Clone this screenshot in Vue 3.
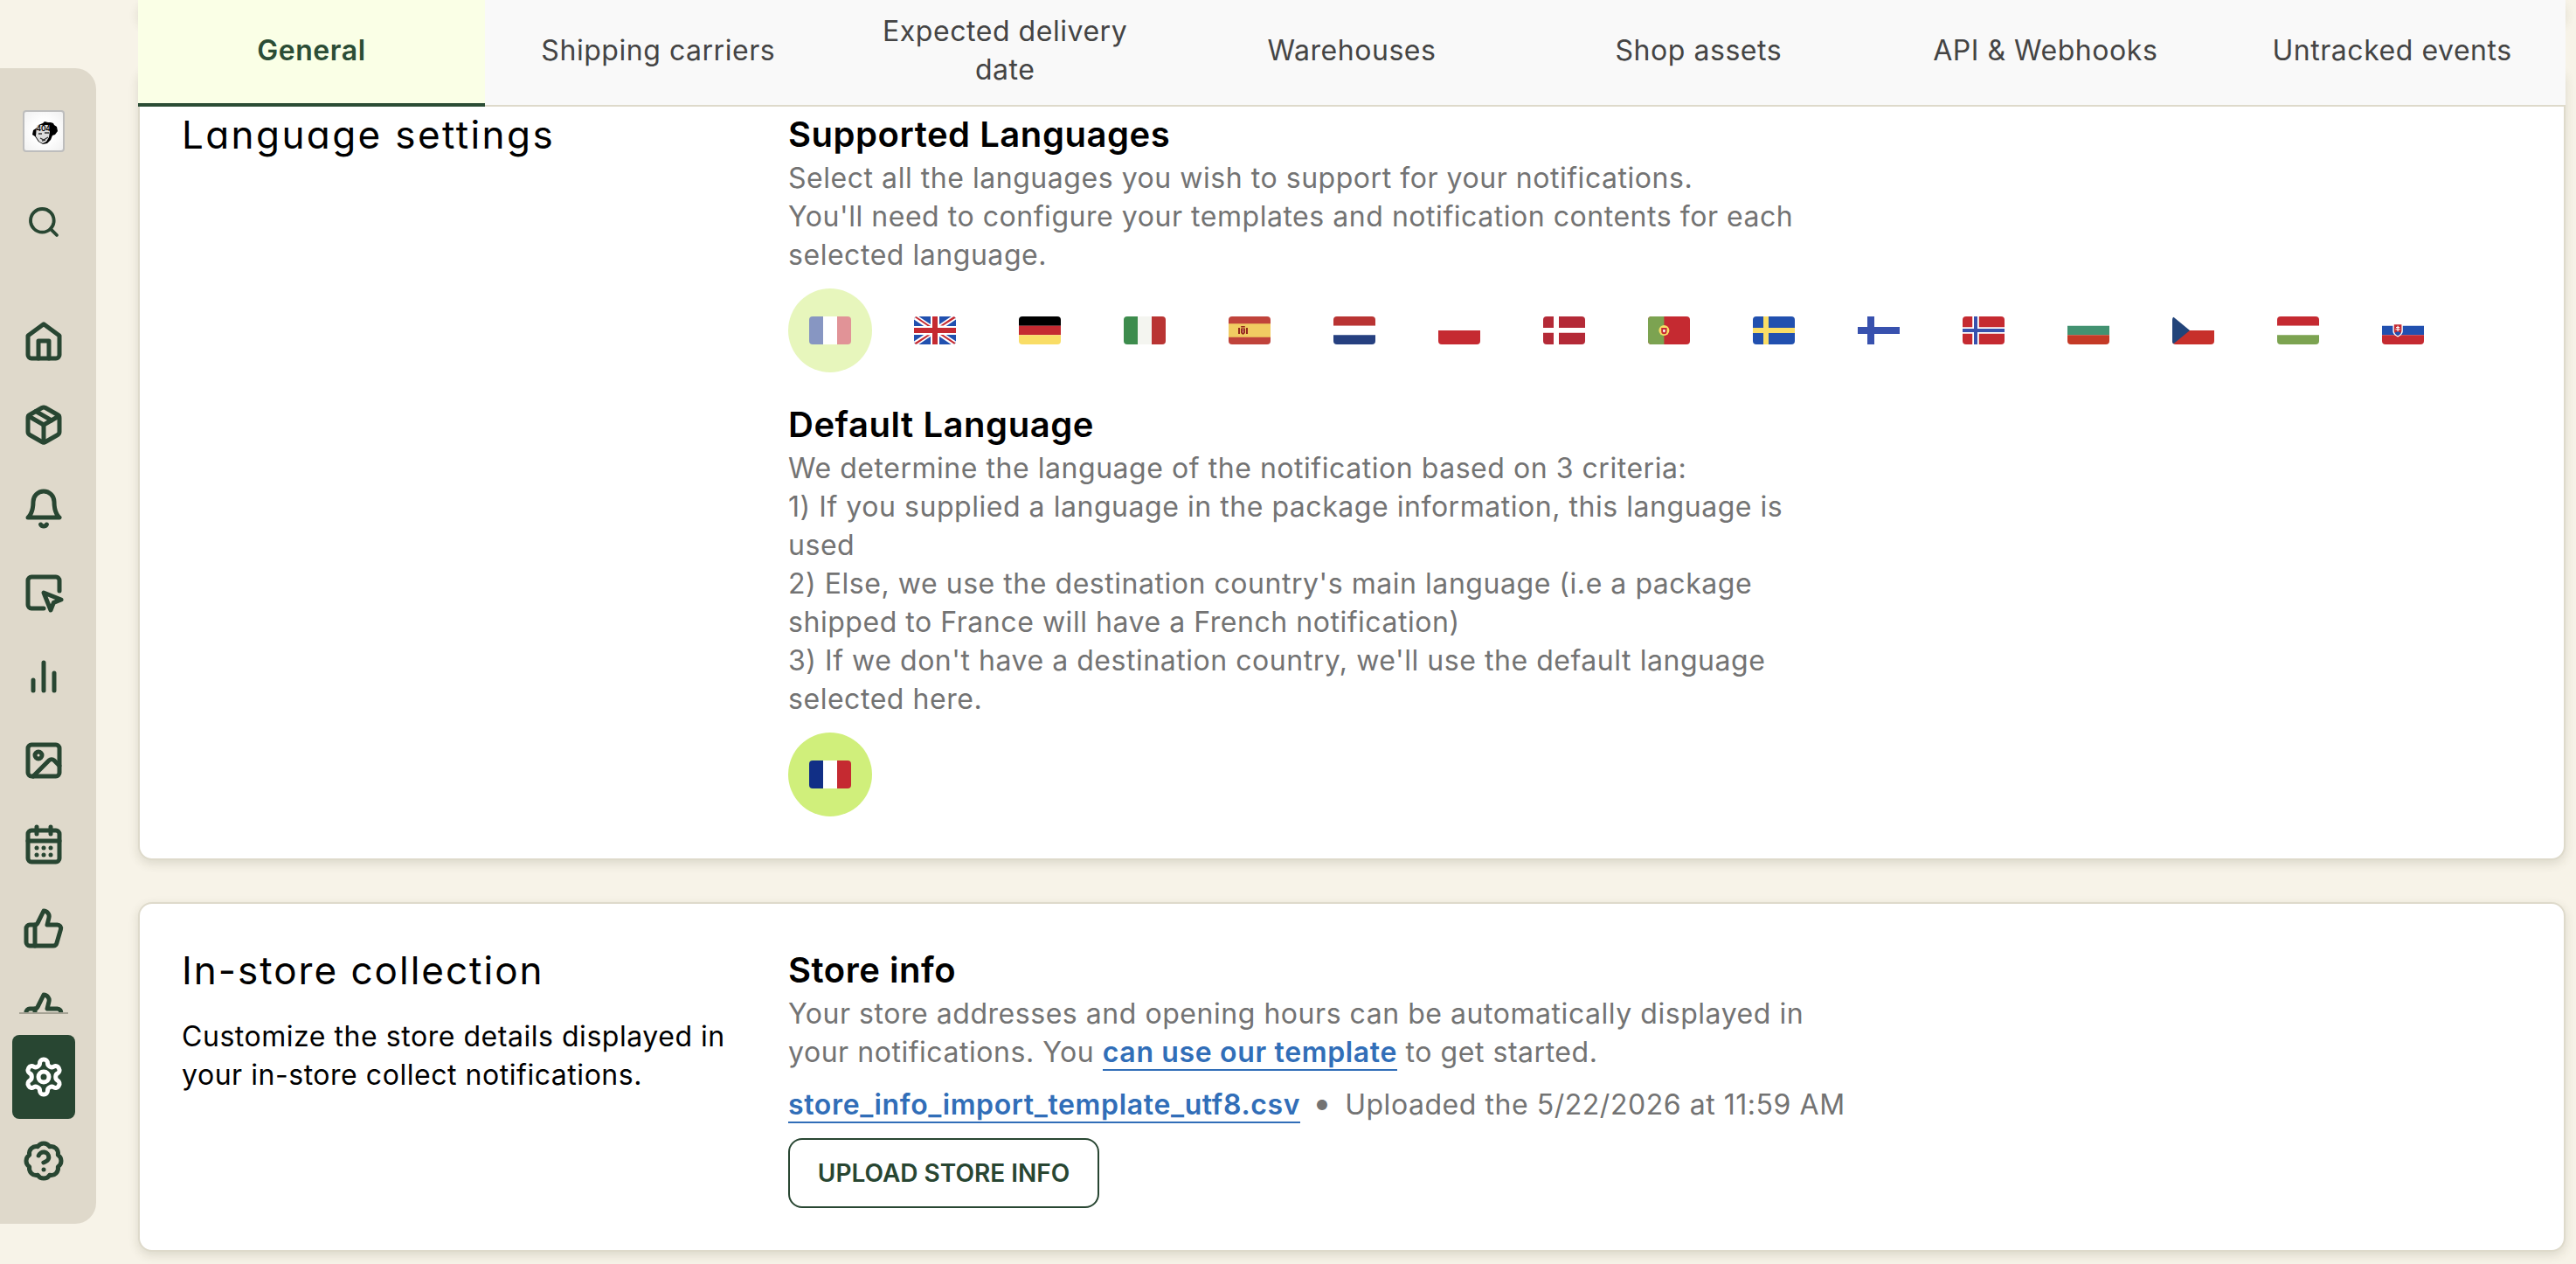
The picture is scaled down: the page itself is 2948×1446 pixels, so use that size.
<script setup>
const tabs = [
  'General',
  'Shipping carriers',
  'Expected delivery date',
  'Warehouses',
  'Shop assets',
  'API & Webhooks',
  'Untracked events',
]

const thumb = [
  'M7 10v12',
  'M15 5.88 14 10h5.83a2 2 0 0 1 1.92 2.56l-2.33 8A2 2 0 0 1 17.5 22H4a2 2 0 0 1-2-2v-8a2 2 0 0 1 2-2h2.76a2 2 0 0 0 1.79-1.11L12 2a3.13 3.13 0 0 1 3 3.88Z',
]

const navItems = [
  { name: 'home', paths: ['m3 9 9-6.6L21 9v11a2 2 0 0 1-2 2H5a2 2 0 0 1-2-2z', 'M9 22V12h6v10'] },
  {
    name: 'packages',
    paths: [
      'M21 8a2 2 0 0 0-1-1.73l-7-4a2 2 0 0 0-2 0l-7 4A2 2 0 0 0 3 8v8a2 2 0 0 0 1 1.73l7 4a2 2 0 0 0 2 0l7-4A2 2 0 0 0 21 16Z',
      'm3.3 7 8.7 5 8.7-5',
      'M12 22V12',
      'm7.5 4.27 9 5.15',
    ],
  },
  { name: 'notifications', paths: ['M6 8a6 6 0 0 1 12 0c0 7 3 9 3 9H3s3-2 3-9', 'M10.3 21a1.94 1.94 0 0 0 3.4 0'] },
  {
    name: 'pages',
    paths: ['M21 11V5a2 2 0 0 0-2-2H5a2 2 0 0 0-2 2v14a2 2 0 0 0 2 2h7', 'm12 12 4 10 1.7-4.3L22 16Z'],
  },
  { name: 'analytics', paths: ['M18 20V10', 'M12 20V4', 'M6 20v-6'] },
  {
    name: 'images',
    paths: [
      'M5 3h14a2 2 0 0 1 2 2v14a2 2 0 0 1-2 2H5a2 2 0 0 1-2-2V5a2 2 0 0 1 2-2z',
      'M11 9a2 2 0 1 1-4 0 2 2 0 0 1 4 0z',
      'm21 15-3.09-3.09a2 2 0 0 0-2.82 0L6 21',
    ],
  },
  {
    name: 'calendar',
    paths: [
      'M5 4h14a2 2 0 0 1 2 2v14a2 2 0 0 1-2 2H5a2 2 0 0 1-2-2V6a2 2 0 0 1 2-2z',
      'M8 2v4M16 2v4M3 10h18',
      'M8 14h.01M12 14h.01M16 14h.01M8 18h.01M12 18h.01M16 18h.01',
    ],
  },
  { name: 'reviews', paths: thumb },
  { name: 'feedback', paths: thumb },
]

const gear = [
  'M12.22 2h-.44a2 2 0 0 0-2 2v.18a2 2 0 0 1-1 1.73l-.43.25a2 2 0 0 1-2 0l-.15-.08a2 2 0 0 0-2.73.73l-.22.38a2 2 0 0 0 .73 2.73l.15.1a2 2 0 0 1 1 1.72v.51a2 2 0 0 1-1 1.74l-.15.09a2 2 0 0 0-.73 2.73l.22.38a2 2 0 0 0 2.73.73l.15-.08a2 2 0 0 1 2 0l.43.25a2 2 0 0 1 1 1.73V20a2 2 0 0 0 2 2h.44a2 2 0 0 0 2-2v-.18a2 2 0 0 1 1-1.73l.43-.25a2 2 0 0 1 2 0l.15.08a2 2 0 0 0 2.73-.73l.22-.39a2 2 0 0 0-.73-2.73l-.15-.08a2 2 0 0 1-1-1.74v-.5a2 2 0 0 1 1-1.74l.15-.09a2 2 0 0 0 .73-2.73l-.22-.38a2 2 0 0 0-2.73-.73l-.15.08a2 2 0 0 1-2 0l-.43-.25a2 2 0 0 1-1-1.73V4a2 2 0 0 0-2-2z',
  'M15 12a3 3 0 1 1-6 0 3 3 0 0 1 6 0z',
]

const help = [
  'M3.85 8.62a4 4 0 0 1 4.78-4.77 4 4 0 0 1 6.74 0 4 4 0 0 1 4.78 4.78 4 4 0 0 1 0 6.74 4 4 0 0 1-4.77 4.78 4 4 0 0 1-6.75 0 4 4 0 0 1-4.78-4.77 4 4 0 0 1 0-6.76Z',
  'M9.09 9a3 3 0 0 1 5.83 1c0 2-3 3-3 3',
  'M12 17h.01',
]

// Flags are lists of filled paths on a 48 x 32 field.
const top3 = 'M0 0H48V10.67H0z'
const mid3 = 'M0 10.67H48V21.33H0z'
const bottom3 = 'M0 21.33H48V32H0z'
const white = '#fff'
const france = [
  ['#112f86', 'M0 0H16V32H0z'],
  [white, 'M16 0H32V32H16z'],
  ['#c52a31', 'M32 0H48V32H32z'],
]
const flags = [
  { code: 'fr', selected: true, shapes: france },
  {
    code: 'gb',
    shapes: [
      ['#2150af', 'M0 0H48V32H0z'],
      [white, 'M0 0H5.4L48 28.4V32H42.6L0 3.6zM48 0V3.6L5.4 32H0V28.4L42.6 0z'],
      ['#c52a31', 'M0 .6 15.5 11H19L2.5 0H0zM48 0H45.5L30 10.6H33.5L48 1.4zM0 32H2.5L18.5 21.2H15L0 30.8zM48 32V30.6L33.5 21H30L46.5 32z'],
      [white, 'M19 0H29V32H19zM0 11H48V21H0z'],
      ['#c52a31', 'M21 0H27V32H21zM0 13H48V19H0z'],
    ],
  },
  { code: 'de', shapes: [['#000', top3], ['#c52a31', mid3], ['#f9dd66', bottom3]] },
  { code: 'it', shapes: [['#3d8c4d', 'M0 0H16V32H0z'], ['#f4f5f0', 'M16 0H32V32H16z'], ['#b93433', 'M32 0H48V32H32z']] },
  {
    code: 'es',
    shapes: [
      ['#c0433b', 'M0 0H48V32H0z'],
      ['#f1cc62', 'M0 8.3H48V23.7H0z'],
      ['#96281c', 'M11 13H13V20H11zM20 13H22V20H20zM14 13.5H19V19L16.5 21 14 19zM14.2 11H18.8V12.6H14.2z'],
      ['#e9b9a0', 'M15.5 15H17.5V16H15.5zM15.8 17H17.2V18.4H15.8z'],
    ],
  },
  { code: 'nl', shapes: [['#b93433', top3], [white, mid3], ['#264080', bottom3]] },
  { code: 'pl', shapes: [[white, 'M0 0H48V16H0z'], ['#c52a31', 'M0 16H48V32H0z']] },
  { code: 'dk', shapes: [['#b42a37', 'M0 0H48V32H0z'], [white, 'M12 0H18V32H12zM0 13H48V18.7H0z']] },
  {
    code: 'pt',
    shapes: [
      ['#c52a31', 'M0 0H48V32H0z'],
      ['#7ca351', 'M0 0H18.4V32H0z'],
      ['#f9dd66', 'M24.4 16a6 6 0 1 1-12 0 6 6 0 0 1 12 0z'],
      ['#c52a31', 'M15.2 13H21.6V17a3.2 3.2 0 0 1-6.4 0z'],
      [white, 'M17.2 15H19.6V17a1.2 1.2 0 0 1-2.4 0z'],
    ],
  },
  { code: 'se', shapes: [['#2150af', 'M0 0H48V32H0z'], ['#f9dd66', 'M12 0H18V32H12zM0 13H48V19H0z']] },
  { code: 'fi', shapes: [[white, 'M0 0H48V32H0z'], ['#3851ae', 'M11 0H19V32H11zM0 12H48V20H0z']] },
  {
    code: 'no',
    shapes: [
      ['#c52a31', 'M0 0H48V32H0z'],
      [white, 'M11.2 0H18.8V32H11.2zM0 12.3H48V19.7H0z'],
      ['#3851ae', 'M13 0H17V32H13zM0 14H48V18H0z'],
    ],
  },
  { code: 'bg', shapes: [[white, top3], ['#429271', mid3], ['#c43a26', bottom3]] },
  {
    code: 'cz',
    shapes: [
      [white, 'M0 0H48V16H0z'],
      ['#c7302b', 'M0 16H48V32H0z'],
      ['#22447a', 'M0 0 1.5 .8 20 16 1.5 31.2 0 32z'],
    ],
  },
  { code: 'hu', shapes: [['#c52a31', top3], [white, mid3], ['#7ca351', bottom3]] },
  {
    code: 'sk',
    shapes: [
      [white, top3],
      ['#2150af', mid3],
      ['#c52a31', bottom3],
      [white, 'M12.4 8.7H23.8V16.5C23.8 20 21 22.3 18.1 23.4 15.2 22.3 12.4 20 12.4 16.5z'],
      ['#c52a31', 'M13.8 9.3H22.4V16.5C22.4 19 20.4 21 18.1 22 15.8 21 13.8 19 13.8 16.5z'],
      ['#2150af', 'M14.6 19C16 17 20.2 17 21.6 19 20.8 20.6 19.4 21.6 18.1 22 16.8 21.6 15.4 20.6 14.6 19z'],
      [white, 'M17.5 10.8H18.7V12H20.2V13H18.7V14.2H20.8V15.3H18.7V17H17.5V15.3H15.4V14.2H17.5V13H16V12H17.5z'],
    ],
  },
]
</script>

<template>
  <div class="page">
    <aside class="sidebar">
      <div class="logo">
        <svg viewBox="0 0 44 44">
          <path d="M10 21l3-2 3-4 5-2 2-2 4 1 3 0 3 1 1 2 3 2 1 5-3 4-3 1-2 5-4 4-5 1-5-3-4-6-3-2z" fill="#000" />
          <path d="M14 15h15v7l-1 7-3 5-4 2-4-2-4-6z" fill="#ddd" />
          <path d="M16 25h4M23 24h5M18 30l4 2 5-3M20 33l4-1" stroke="#333" stroke-width="1.3" fill="none" />
          <text x="21.6" y="22" text-anchor="middle" class="logo-text">404</text>
        </svg>
      </div>
      <div class="search">
        <svg class="stroked" viewBox="0 0 24 24">
          <path d="M19 11a8 8 0 1 1-16 0 8 8 0 0 1 16 0z" />
          <path d="m21 21-4.3-4.3" />
        </svg>
      </div>
      <nav class="nav">
        <a v-for="item in navItems" :key="item.name" class="nav-item">
          <svg class="stroked" viewBox="0 0 24 24"><path v-for="d in item.paths" :key="d" :d="d" /></svg>
        </a>
      </nav>
      <a class="nav-item active">
        <svg class="stroked" viewBox="0 0 24 24"><path v-for="d in gear" :key="d" :d="d" /></svg>
      </a>
      <a class="nav-item">
        <svg class="stroked" viewBox="0 0 24 24"><path v-for="d in help" :key="d" :d="d" /></svg>
      </a>
    </aside>

    <main class="main">
      <div class="tabs">
        <div v-for="(tab, i) in tabs" :key="tab" class="tab" :class="{ current: i === 0 }">
          <span>{{ tab }}</span>
        </div>
      </div>

      <section class="card previous"></section>

      <section class="card">
        <div class="side">
          <h2 class="title">Language settings</h2>
        </div>
        <div class="content">
          <h3>Supported Languages</h3>
          <p class="text">
            Select all the languages you wish to support for your notifications.<br />
            You'll need to configure your templates and notification contents for each selected language.
          </p>
          <div class="flags">
            <span v-for="flag in flags" :key="flag.code" class="bubble" :class="{ disabled: flag.selected }">
              <svg class="flag" viewBox="0 0 48 32">
                <path v-for="(s, i) in flag.shapes" :key="i" :fill="s[0]" :d="s[1]" />
              </svg>
            </span>
          </div>
          <h3 class="spaced">Default Language</h3>
          <p class="text">
            We determine the language of the notification based on 3 criteria:<br />
            1) If you supplied a language in the package information, this language is used<br />
            2) Else, we use the destination country's main language (i.e a package shipped to France will have a
            French notification)<br />
            3) If we don't have a destination country, we'll use the default language selected here.
          </p>
          <div class="flags">
            <span class="bubble chosen">
              <svg class="flag" viewBox="0 0 48 32">
                <path v-for="(s, i) in france" :key="i" :fill="s[0]" :d="s[1]" />
              </svg>
            </span>
          </div>
        </div>
      </section>

      <section class="card">
        <div class="side">
          <h2 class="title store">In-store collection</h2>
          <p class="lead">Customize the store details displayed in your in-store collect notifications.</p>
        </div>
        <div class="content">
          <h3>Store info</h3>
          <p class="text">
            Your store addresses and opening hours can be automatically displayed in<br />
            your notifications. You <a class="link">can use our template</a> to get started.
          </p>
          <div class="file">
            <a class="link">store_info_import_template_utf8.csv</a>
            <span class="dot">•</span>
            <span>Uploaded the 5/22/2026 at 11:59 AM</span>
          </div>
          <button class="upload">UPLOAD STORE INFO</button>
        </div>
      </section>
    </main>
  </div>
</template>

<style>
body {
  background: #f7f3e8;
}
</style>

<style scoped>
.page {
  display: flex;
  align-items: flex-start;
  gap: 48px;
  width: 2948px;
  height: 1446px;
  overflow: hidden;
  box-sizing: border-box;
  background: #f7f3e8;
  font-family: Inter, sans-serif;
  font-size: 32px;
  line-height: 44px;
  letter-spacing: 0.54px;
  color: #000;
}

.sidebar {
  display: flex;
  flex-direction: column;
  align-items: center;
  flex: none;
  box-sizing: border-box;
  width: 110px;
  height: 1322px;
  margin-top: 78px;
  padding: 48px 24px 0 14px;
  border-radius: 0 24px 24px 0;
  background: #dfd9cb;
  color: #284632;
}

.logo {
  box-sizing: border-box;
  width: 48px;
  height: 48px;
  border: 2px solid #bdbdbd;
  border-radius: 4px;
  background: radial-gradient(#fff 40%, #f0f0f0);
}

.logo svg {
  display: block;
}

.logo-text {
  font-size: 8.5px;
  font-weight: 600;
  letter-spacing: -0.3px;
}

.search {
  width: 40px;
  height: 40px;
  margin: 60px 0 68px;
}

.stroked {
  display: block;
  width: 48px;
  height: 48px;
  fill: none;
  stroke: currentColor;
  stroke-width: 2.5;
  stroke-linecap: round;
  stroke-linejoin: round;
}

.search .stroked {
  width: 40px;
  height: 40px;
  stroke-width: 2.3;
}

.nav {
  width: 56px;
  height: 816px;
  margin-bottom: 24px;
  overflow: hidden;
  border-bottom: 2px solid #a5a294;
}

.nav-item {
  display: flex;
  align-items: center;
  justify-content: center;
  flex: none;
  width: 72px;
  height: 96px;
  border-radius: 8px;
}

.nav .nav-item {
  width: 56px;
}

.nav-item.active {
  background: #284632;
  color: #fff;
}

.main {
  position: relative;
  display: flex;
  flex-direction: column;
  gap: 48px;
  width: 2778px;
}

/* Stays above the scrolled cards. */
.tabs {
  position: absolute;
  z-index: 1;
  top: 0;
  left: 0;
  display: flex;
  box-sizing: border-box;
  width: 100%;
  height: 122px;
  border-bottom: 2px solid #dedacb;
  background: #f9f9f9;
}

.tab {
  display: flex;
  align-items: center;
  justify-content: center;
  flex: 1 1 0;
  box-sizing: border-box;
  height: 122px;
  padding: 0 40px 6px;
  text-align: center;
  color: #444;
}

.tab.current {
  padding-bottom: 2px;
  border-bottom: 4px solid #2b4d35;
  background: #faffe6;
  color: #2b4d35;
  font-weight: 600;
}

.card {
  display: flex;
  gap: 48px;
  box-sizing: border-box;
  padding: 48px;
  border: 2px solid #dedacb;
  border-radius: 16px;
  background: #fff;
  box-shadow: 0 4px 12px rgba(60, 60, 30, 0.14);
}

.card.previous {
  height: 28px;
  padding: 0;
}

.side {
  width: 646px;
  flex: none;
}

.content {
  flex: 1;
}

.title {
  margin: 0;
  font-size: 44px;
  font-weight: 400;
  line-height: 56px;
  letter-spacing: 2.4px;
  font-feature-settings: 'cv11';
}

.title.store {
  letter-spacing: 2px;
}

.lead {
  margin: 26px 0 0;
}

h3 {
  margin: 0;
  font-size: 40px;
  font-weight: 600;
  line-height: 56px;
}

h3.spaced {
  margin-top: 32px;
}

.text {
  max-width: 1200px;
  margin: 0 0 16px;
  color: #737373;
}

.flags {
  display: flex;
  gap: 24px;
}

.bubble {
  display: flex;
  align-items: center;
  justify-content: center;
  width: 96px;
  height: 96px;
  border-radius: 50%;
}

.bubble.chosen,
.bubble.disabled {
  background: #d0ef7b;
}

.bubble.disabled {
  opacity: 0.5;
}

.flag {
  display: block;
  width: 48px;
  height: 32px;
  border-radius: 4px;
}

.link {
  border-bottom: 2px solid #316eb8;
  color: #316eb8;
  font-weight: 600;
  letter-spacing: 0.65px;
}

.file {
  margin-bottom: 16px;
  color: #737373;
}

.dot {
  margin: 0 15px 0 14px;
  font-size: 38px;
  line-height: 0;
}

.upload {
  display: block;
  box-sizing: border-box;
  width: 356px;
  height: 80px;
  padding: 0;
  border: 2px solid #284632;
  border-radius: 16px;
  background: #fff;
  color: #284632;
  font-family: inherit;
  font-size: 28px;
  font-weight: 600;
}
</style>
